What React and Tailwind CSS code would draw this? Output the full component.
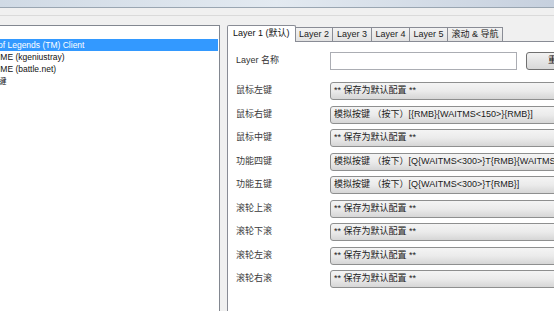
import React from 'react';

const FONT = { fontFamily: '"Liberation Sans", "Noto Sans CJK SC", sans-serif' };

const DEFAULT = '** 保存为默认配置 **';

const rows = [
  { label: '鼠标左键', value: DEFAULT },
  { label: '鼠标右键', value: '模拟按键 （按下）[{RMB}{WAITMS<150>}{RMB}]' },
  { label: '鼠标中键', value: DEFAULT },
  { label: '功能四键', value: '模拟按键 （按下）[Q{WAITMS<300>}T{RMB}{WAITMS<100>}Q]' },
  { label: '功能五键', value: '模拟按键 （按下）[Q{WAITMS<300>}T{RMB}]' },
  { label: '滚轮上滚', value: DEFAULT },
  { label: '滚轮下滚', value: DEFAULT },
  { label: '滚轮左滚', value: DEFAULT },
  { label: '滚轮右滚', value: DEFAULT },
];

const tabs = [
  { name: 'Layer 2', w: 'w-[37px]' },
  { name: 'Layer 3', w: 'w-[39px]' },
  { name: 'Layer 4', w: 'w-[38px]' },
  { name: 'Layer 5', w: 'w-[38px]' },
  { name: '滚动 & 导航', w: 'w-[55px]' },
];

const apps = [
  { text: 'of Legends (TM) Client', selected: true },
  { text: 'IME (kgeniustray)' },
  { text: 'IME (battle.net)' },
  { text: '键' },
];

const App = () => {
  return (
    <div className="w-[554px] h-[311px] overflow-hidden bg-[#f0f0f0] flex flex-col" style={FONT}>
      {/* window chrome */}
      <div className="h-[8px] shrink-0 bg-gradient-to-r from-[#d0dae5] via-[#e3eaf1] to-[#c6d0de] border-b border-[#9aa6b2]" />
      <div className="h-[8px] shrink-0 border-b border-[#dadada]" />

      <div className="flex flex-1 min-h-0 pt-[9px]">
        {/* application list */}
        <div className="w-[220px] shrink-0 bg-white border-t border-r border-[#828790] pt-[13px] overflow-hidden">
          {apps.map((a) => (
            <div
              key={a.text}
              className={`h-[12px] w-[218px] flex items-center text-[8.5px] leading-none -indent-[2px] whitespace-nowrap ${a.selected ? 'bg-[#3399ff] text-white' : 'text-[#111]'}`}
            >
              {a.text}
            </div>
          ))}
        </div>

        {/* tab control */}
        <div className="ml-[7px] -mt-[1px] flex-1 flex flex-col min-w-0 overflow-hidden">
          <div className="flex items-end h-[17px] shrink-0">
            <div className="w-[69px] shrink-0 h-[17px] bg-white border border-b-0 border-[#898c95] rounded-t-[2px] flex items-center pl-[5px] text-[9px] text-[#111] -mb-px relative z-10 whitespace-nowrap">
              Layer 1 (默认)
            </div>
            {tabs.map((t) => (
              <div
                key={t.name}
                className={`${t.w} shrink-0 h-[14px] bg-gradient-to-b from-[#f3f3f3] to-[#e2e2e2] border border-l-0 border-b-0 border-[#898c95] flex items-center justify-center text-[9px] text-[#222] whitespace-nowrap`}
              >
                {t.name}
              </div>
            ))}
          </div>

          <div className="flex-1 bg-white border-t border-l border-[#898c95] pl-[8px] pt-[10px] text-[9px]">
            <div className="flex items-center h-[18px]">
              <div className="w-[94px] shrink-0 text-[#333]">Layer 名称</div>
              <div className="w-[187px] shrink-0 h-[18px] border border-[#abadb3] bg-white" />
              <div className="ml-[9px] w-[62px] h-[18px] shrink-0 rounded-[3px] border border-[#707070] bg-gradient-to-b from-[#f2f2f2] to-[#d8d8d8] flex items-center justify-center text-[#111]">
                重置
              </div>
            </div>

            <div className="mt-[12px] flex flex-col gap-[5.5px]">
              {rows.map((r) => (
                <div key={r.label} className="flex items-center h-[18px]">
                  <div className="w-[94px] shrink-0 text-[#3a3a3a]">{r.label}</div>
                  <div className="w-[300px] h-[18px] shrink-0 rounded-[3px] border border-[#8e8f8f] bg-gradient-to-b from-[#f4f4f4] via-[#ebebeb] to-[#d6d6d6] flex items-center pl-[3px] text-[#1a1a1a] whitespace-nowrap overflow-hidden">
                    {r.value}
                  </div>
                </div>
              ))}
            </div>
          </div>
        </div>
      </div>
    </div>
  );
};

export default App;
